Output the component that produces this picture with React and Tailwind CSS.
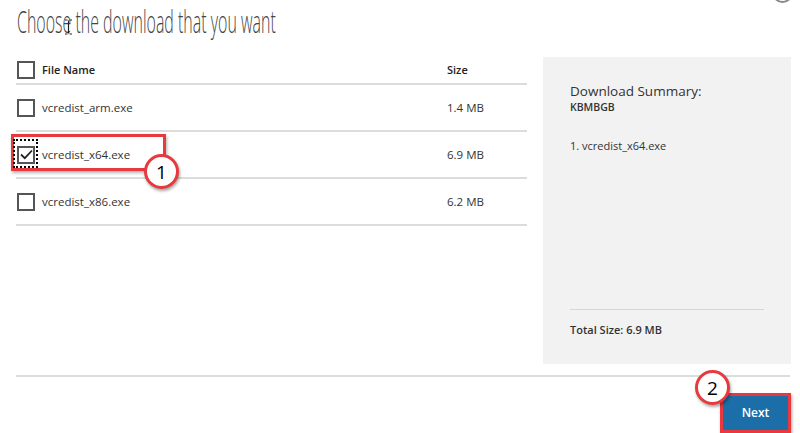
import React from 'react'

const files = [
  { name: 'vcredist_arm.exe', size: '1.4 MB', checked: false },
  { name: 'vcredist_x64.exe', size: '6.9 MB', checked: true },
  { name: 'vcredist_x86.exe', size: '6.2 MB', checked: false },
]

function Box({ checked }) {
  return (
    <span className="flex h-[18px] w-[18px] shrink-0 items-center justify-center border-2 border-[#555] bg-white">
      {checked && (
        <svg width="13" height="11" viewBox="0 0 13 11">
          <path d="M1 5.5 L4.8 9.2 L12 1.5" fill="none" stroke="#222" strokeWidth="1.8" />
        </svg>
      )}
    </span>
  )
}

function Badge({ n }) {
  return (
    <span className="flex h-[35px] w-[35px] items-center justify-center rounded-full border-[3px] border-[#e8393f] bg-white pt-[2px] text-[19px] text-black shadow-[1px_2px_3px_rgba(0,0,0,0.35)]">
      {n}
    </span>
  )
}

export default function App() {
  return (
    <div className="relative h-[433px] w-[800px] overflow-hidden bg-white font-['Open_Sans',sans-serif] text-[#333]">
      {/* Title */}
      <div className="pl-[17px] pt-[1px]">
        <h1 className="inline-block origin-left scale-x-[0.515] whitespace-nowrap text-[31px] font-light leading-[40px] text-[#444]">
          Choose the download that you want
        </h1>
      </div>

      <div className="mt-[16px] flex pl-[16px]">
        {/* File table */}
        <div className="w-[511px]">
          <div className="flex h-[28px] items-start border-b-2 border-[#dcdcdc] pt-[4px]">
            <span className="ml-[1px]"><Box /></span>
            <span className="ml-[7px] w-[405px] text-[11px] font-semibold leading-[18px] text-[#222]">File Name</span>
            <span className="text-[11px] font-semibold leading-[18px] text-[#222]">Size</span>
          </div>
          {files.map((f) => (
            <div key={f.name} className="flex h-[47px] items-center border-b-2 border-[#dcdcdc]">
              <span className="ml-[1px]"><Box checked={f.checked} /></span>
              <span className="ml-[7px] w-[405px] text-[11.5px] text-[#333]">{f.name}</span>
              <span className="text-[11.5px] text-[#333]">{f.size}</span>
            </div>
          ))}
        </div>

        {/* Summary */}
        <div className="ml-[16px] flex h-[307px] w-[248px] flex-col bg-[#f2f2f2] px-[27px]">
          <p className="mt-[25px] text-[13.5px] leading-[18px] text-[#333]">Download Summary:</p>
          <p className="mt-[1px] text-[10.5px] font-semibold leading-[13px] text-[#333]">KBMBGB</p>
          <p className="mt-[24px] text-[11px] leading-[16px] text-[#333]">1. vcredist_x64.exe</p>
          <div className="mt-auto border-t border-[#d6d6d6]" />
          <p className="mb-[26px] mt-[12px] text-[11px] font-semibold leading-[16px] text-[#333]">Total Size: 6.9 MB</p>
        </div>
      </div>

      <div className="ml-[16px] mr-[10px] mt-[11px] border-t-2 border-[#dcdcdc]" />

      <div className="flex justify-end pr-[9px] pt-[16px]">
        <button className="h-[40px] w-[71px] border-[3px] border-[#e8393f] bg-[#1b6ea8] text-[12px] font-semibold text-white shadow-[1px_2px_3px_rgba(0,0,0,0.35)]">
          Next
        </button>
      </div>

      {/* Annotations */}
      <div className="absolute left-[11px] top-[134px] h-[37px] w-[155px] border-[3px] border-[#e8393f] shadow-[1px_2px_3px_rgba(0,0,0,0.3)]" />
      <div className="absolute left-[13px] top-[139px] h-[29px] w-[25px] border-2 border-dotted border-black" />
      <div className="absolute left-[144px] top-[154px]"><Badge n="1" /></div>
      <div className="absolute left-[695px] top-[370px]"><Badge n="2" /></div>

      {/* text cursor */}
      <svg className="absolute left-[64px] top-[19px]" width="9" height="16" viewBox="0 0 9 16">
        <path d="M1 1 H3.5 M5.5 1 H8 M4.5 1.5 V14.5 M1 15 H3.5 M5.5 15 H8" stroke="#222" strokeWidth="1.2" fill="none" />
      </svg>
      <div className="absolute left-[772px] top-[-18px] h-[21px] w-[21px] rounded-full border-2 border-[#888]" />
    </div>
  )
}
